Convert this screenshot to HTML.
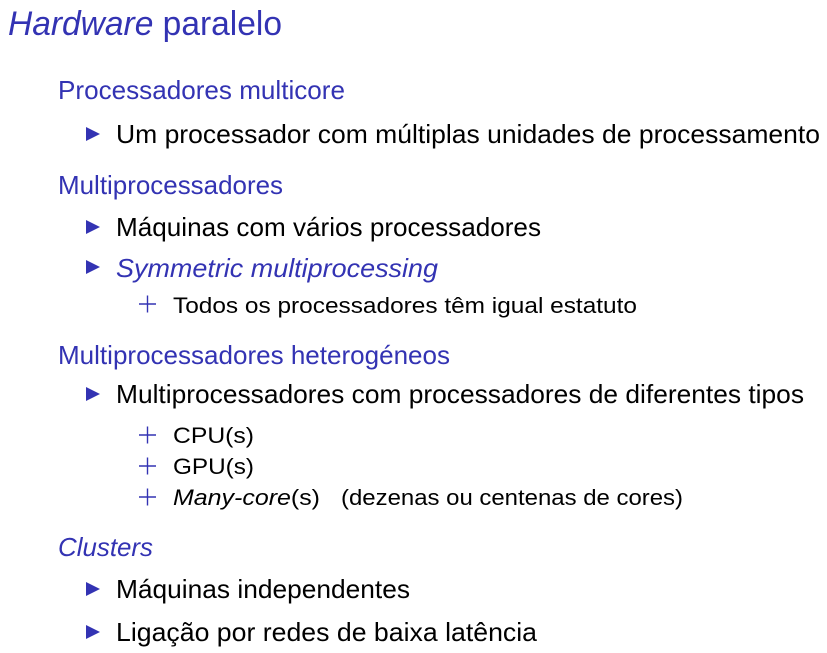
<!DOCTYPE html>
<html><head><meta charset="utf-8"><style>
html,body{margin:0;padding:0;background:#fff;}
svg{display:block;}
text{font-family:"Liberation Sans","DejaVu Sans",sans-serif;}
.b{fill:#3333b3;}
.k{fill:#000;}
</style></head><body>
<svg width="827" height="653" viewBox="0 0 827 653" xmlns="http://www.w3.org/2000/svg">
<defs>
<polygon id="tri" points="0,-7 14,0 0,7" fill="#3333b3"/>
<g id="plus" stroke="#3333b3" stroke-width="1.4"><line x1="0" y1="0" x2="17" y2="0"/><line x1="8.5" y1="-8.5" x2="8.5" y2="8.5"/></g>
</defs>
<text x="8" y="35" font-size="34" class="b" textLength="274" lengthAdjust="spacingAndGlyphs"><tspan font-style="italic">Hardware</tspan> paralelo</text>

<text x="58" y="99" font-size="26" class="b" textLength="287" lengthAdjust="spacingAndGlyphs">Processadores multicore</text>
<use href="#tri" x="86" y="134"/>
<text x="116" y="143" font-size="26" class="k" textLength="704" lengthAdjust="spacingAndGlyphs">Um processador com múltiplas unidades de processamento</text>

<text x="58" y="194" font-size="26" class="b" textLength="225" lengthAdjust="spacingAndGlyphs">Multiprocessadores</text>
<use href="#tri" x="86" y="227"/>
<text x="116" y="236" font-size="26" class="k" textLength="425" lengthAdjust="spacingAndGlyphs">Máquinas com vários processadores</text>
<use href="#tri" x="86" y="267"/>
<text x="116" y="277" font-size="26" class="b" font-style="italic" textLength="322" lengthAdjust="spacingAndGlyphs">Symmetric multiprocessing</text>
<use href="#plus" x="139" y="304"/>
<text x="173" y="313" font-size="22" class="k" textLength="464" lengthAdjust="spacingAndGlyphs">Todos os processadores têm igual estatuto</text>

<text x="58" y="364" font-size="26" class="b" textLength="392" lengthAdjust="spacingAndGlyphs">Multiprocessadores heterogéneos</text>
<use href="#tri" x="86" y="394"/>
<text x="116" y="403" font-size="26" class="k" textLength="688" lengthAdjust="spacingAndGlyphs">Multiprocessadores com processadores de diferentes tipos</text>
<use href="#plus" x="139" y="435"/>
<text x="173" y="443" font-size="22" class="k" textLength="81" lengthAdjust="spacingAndGlyphs">CPU(s)</text>
<use href="#plus" x="139" y="466"/>
<text x="173" y="474" font-size="22" class="k" textLength="81" lengthAdjust="spacingAndGlyphs">GPU(s)</text>
<use href="#plus" x="139" y="497"/>
<text x="173" y="505" font-size="22" class="k" textLength="147" lengthAdjust="spacingAndGlyphs"><tspan font-style="italic">Many-core</tspan>(s)</text>
<text x="341" y="505" font-size="22" class="k" textLength="342" lengthAdjust="spacingAndGlyphs">(dezenas ou centenas de cores)</text>

<text x="58" y="556" font-size="26" class="b" font-style="italic" textLength="95" lengthAdjust="spacingAndGlyphs">Clusters</text>
<use href="#tri" x="86" y="589"/>
<text x="116" y="598" font-size="26" class="k" textLength="294" lengthAdjust="spacingAndGlyphs">Máquinas independentes</text>
<use href="#tri" x="86" y="632"/>
<text x="116" y="641" font-size="26" class="k" textLength="421" lengthAdjust="spacingAndGlyphs">Ligação por redes de baixa latência</text>
</svg>
</body></html>
